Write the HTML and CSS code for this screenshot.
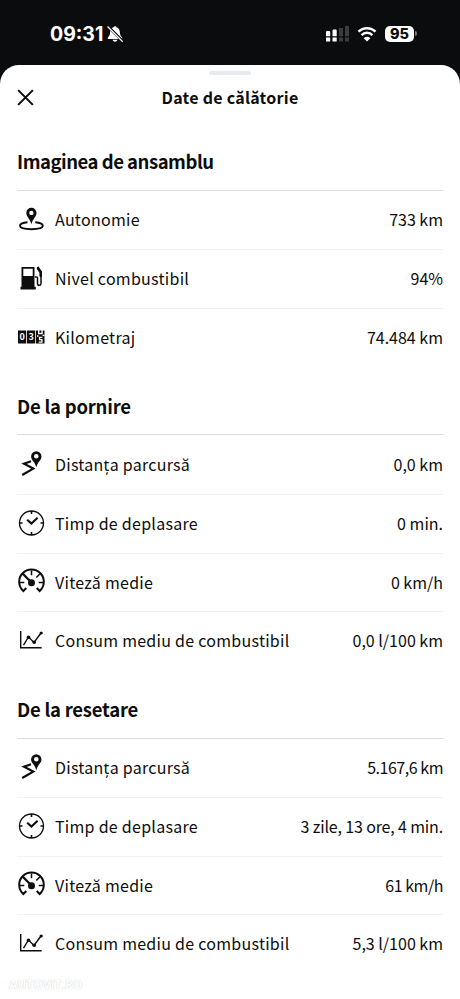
FILE: index.html
```html
<!DOCTYPE html>
<html lang="ro">
<head>
<meta charset="utf-8">
<title>Date de călătorie</title>
<link rel="stylesheet" href="styles.css">
</head>
<body>
<svg class="defs" aria-hidden="true">
  <symbol id="range" viewBox="0 0 28 28">
    <path fill-rule="evenodd" d="M14.400 2.800a5.100 5.100 0 0 0-5.100 5.100c0 3.800 3.600 5.400 5.100 11.400 1.500-6 5.100-7.600 5.100-11.400a5.100 5.100 0 0 0-5.100-5.100zm0 2.900a2.200 2.200 0 1 1 0 4.400 2.200 2.200 0 0 1 0-4.400z"/>
    <path class="line" stroke-width="1.900" d="M10.500 17.300C6 17.800 3 19 3 20.800c0 2.200 5 3.400 11.400 3.400s11.400-1.200 11.400-3.400c0-1.800-3-3-7.500-3.500"/>
  </symbol>
  <symbol id="fuel" viewBox="0 0 28 28">
    <path fill-rule="evenodd" d="M4.500 3h13v19.800h1.300v2.600H3.500v-2.600h1zM6.300 4.800v7.300h9.400V4.800z"/>
    <path class="line" stroke-width="1.500" d="M18 13h1.500q1 0 1 1v5.500q0 1.800 1.700 1.800T24 19.500V10"/>
    <path d="M20 3l1.500-.5L25 7.500v6l-2.600-1.200V8.700L19.800 5z"/>
  </symbol>
  <symbol id="route" viewBox="0 0 28 28">
    <path fill-rule="evenodd" d="M19.300 1.200A5.200 5.200 0 0 0 14.100 6.400c0 3.800 3.800 5 5.200 10.900 1.400-5.900 5.200-7.100 5.200-10.900a5.200 5.200 0 0 0-5.200-5.200zm0 2.700a2.300 2.300 0 1 1 0 4.600 2.300 2.300 0 0 1 0-4.600z"/>
    <path class="line" stroke-width="2.200" d="M14 11.200l-7 2.400 9.300 5L5.200 25"/>
  </symbol>
  <symbol id="clock" viewBox="0 0 28 28">
    <circle class="line" stroke-width="1.300" cx="14.500" cy="14" r="12"/>
    <path class="line" stroke-width="1.600" d="M14.500 2v3M14.500 23v3M2.500 14h3M23.500 14h3"/>
    <path class="line" stroke-width="2.100" d="M10.200 10.700l4.200 3.800 6.200-5.700"/>
  </symbol>
  <symbol id="speed" viewBox="0 0 28 28">
    <path class="line" stroke-width="2" d="M9.300 20l-3 3A12.300 12.300 0 1 1 22.700 23l-3-3"/>
    <path class="line" stroke-width="1.500" d="M14.500 2.500v4.700M2.500 14.500h4.800M21.700 14.500h4.800M22.800 6l-3.500 3.600"/>
    <path class="line" stroke-width="2.300" d="M5.800 5.800l8.700 8.700"/>
    <circle cx="14.500" cy="14.700" r="3.500"/>
  </symbol>
  <symbol id="chart" viewBox="0 0 28 28">
    <path class="line" stroke-width="1.400" d="M3.700 5v16.700h21"/>
    <path class="line" stroke-width="1.400" d="M6.500 19.200L11.500 11l5.500 5.500L24 7"/>
    <circle cx="11.500" cy="11.200" r="1.800"/><circle cx="17.200" cy="16.300" r="1.800"/><circle cx="24.200" cy="7" r="1.600"/>
  </symbol>
</svg>

<header class="status">
  <div class="clock">
    <span class="time">09:31</span>
    <svg class="bell" viewBox="0 0 18 18">
      <path d="M9 1.200c.8 0 1.300.5 1.500 1.100 2.300.8 3.300 2.800 3.400 5.200.1 2.600 1 3.600 2 4.700.8.900.4 1.800-.6 1.800H2.700c-1 0-1.400-.9-.6-1.800 1-1.100 1.900-2.100 2-4.700.1-2.400 1.100-4.400 3.400-5.200.2-.6.700-1.100 1.500-1.100zM6.600 14.800h4.800c-.3 1.300-1.200 2-2.400 2s-2.100-.7-2.400-2z"/>
      <path class="cut" d="M2 1.500L16.500 16"/><path class="slash" d="M1.500 1.500L16.700 16.700"/>
    </svg>
  </div>
  <div class="indicators">
    <svg class="signal" viewBox="0 0 24 18">
      <path d="M1 6h2.200q1 0 1 1v4.300H0V7q0-1 1-1zM0 12.500h4.200v4H0zM7.500 4.500h2.200q1 0 1 1v5.800H6.500V5.500q0-1 1-1zM6.500 12.500h4.200v4H6.500z"/>
      <path class="dim" d="M13 3h4v8.300h-4zM13 12.500h4v4h-4zM19 1h4v10.300h-4zM19 12.500h4v4h-4z"/>
    </svg>
    <svg class="wifi" viewBox="0 0 20 16">
      <path class="arc" d="M1.500 5.700a12 12 0 0 1 17 0M4.600 9.100a7.600 7.600 0 0 1 10.800 0"/>
      <path d="M10 15.500l-3.300-3.300a4.700 4.700 0 0 1 6.600 0z"/>
    </svg>
    <div class="battery"><span class="charge">95</span><span class="nub"></span></div>
  </div>
</header>

<main class="sheet">
  <div class="grabber"></div>
  <div class="titlebar">
    <svg class="close" viewBox="0 0 18 18"><path d="M1.200 1.200l15.600 15.600M16.800 1.200L1.200 16.800"/></svg>
    <h1>Date de călătorie</h1>
  </div>

  <section>
    <h2 class="overview">Imaginea de ansamblu</h2>
    <ul>
      <li><svg class="icon"><use href="#range"/></svg><span class="label">Autonomie</span><span class="value">733 km</span></li>
      <li><svg class="icon"><use href="#fuel"/></svg><span class="label">Nivel combustibil</span><span class="value">94%</span></li>
      <li>
        <svg class="icon odo" viewBox="0 0 28 28">
          <path d="M1 7.500h8.200v13H1zM10 7.500h8.200v13H10zM19 7.500h8.500v13H19z"/>
          <text x="5.100" y="17.200">0</text><text x="14.100" y="17.200">3</text>
          <path class="digit" d="M21.700 6.500v4h3.400v-4M25.400 14.300h-2.800v2.400h2.300v2.500h-3.200M20 13h1.500M25.500 12.300h2"/>
        </svg>
        <span class="label">Kilometraj</span><span class="value">74.484 km</span>
      </li>
    </ul>
  </section>
  <section>
    <h2>De la pornire</h2>
    <ul>
      <li><svg class="icon"><use href="#route"/></svg><span class="label">Distanța parcursă</span><span class="value">0,0 km</span></li>
      <li><svg class="icon"><use href="#clock"/></svg><span class="label">Timp de deplasare</span><span class="value">0 min.</span></li>
      <li><svg class="icon"><use href="#speed"/></svg><span class="label">Viteză medie</span><span class="value">0 km/h</span></li>
      <li><svg class="icon"><use href="#chart"/></svg><span class="label">Consum mediu de combustibil</span><span class="value">0,0 l/100 km</span></li>
    </ul>
  </section>
  <section>
    <h2>De la resetare</h2>
    <ul>
      <li><svg class="icon"><use href="#route"/></svg><span class="label">Distanța parcursă</span><span class="value tight">5.167,6 km</span></li>
      <li><svg class="icon"><use href="#clock"/></svg><span class="label">Timp de deplasare</span><span class="value snug">3 zile, 13 ore, 4 min.</span></li>
      <li><svg class="icon"><use href="#speed"/></svg><span class="label">Viteză medie</span><span class="value tight">61 km/h</span></li>
      <li><svg class="icon"><use href="#chart"/></svg><span class="label">Consum mediu de combustibil</span><span class="value">5,3 l/100 km</span></li>
    </ul>
  </section>
  <div class="watermark">AUTOVIT.RO</div>
</main>
</body>
</html>
```
FILE: styles.css
```css
* { box-sizing: border-box; }
body {
  margin: 0;
  height: 999px;
  overflow: hidden;
  background: #0b0c0e;
  color: #0d0d0d;
  font-family: "Noto Sans CJK SC", "Noto Sans", sans-serif;
}
.defs { position: absolute; width: 0; height: 0; }
.line { fill: none; stroke: #0d0d0d; }
.odo text { font: bold 9px "Noto Sans CJK SC", sans-serif; fill: #fff; text-anchor: middle; }
.digit { fill: none; stroke: #fff; stroke-width: 1.3; }

.status {
  height: 65px;
  padding: 2px 43px 0 50px;
  display: flex;
  align-items: center;
  justify-content: space-between;
  color: #fff;
}
.clock, .indicators { display: flex; align-items: center; }
.time { font: 700 19.5px/24px Inter, sans-serif; }
.bell { width: 18px; height: 18px; margin-left: 3px; fill: #fff; }
.cut { stroke: #0b0c0e; stroke-width: 3; }
.slash { stroke: #fff; stroke-width: 1.3; }
.signal { width: 24px; height: 18px; fill: #fff; }
.dim { fill: #3b3c3e; }
.wifi { width: 20px; height: 16px; margin-left: 7px; fill: #fff; }
.arc { fill: none; stroke: #fff; stroke-width: 2.5; }
.battery { display: flex; align-items: center; margin-left: 8px; gap: 1px; }
.charge {
  width: 29px;
  height: 16px;
  border-radius: 5px;
  background: #fff;
  color: #0b0c0e;
  font: 800 14.5px/16px Inter, sans-serif;
  text-align: center;
}
.nub { width: 2px; height: 5px; border-radius: 0 2px 2px 0; background: #77787a; }

.sheet {
  height: 934px;
  padding: 0 17px;
  border-radius: 19px 19px 0 0;
  background: #fff;
  display: flow-root;
}
.grabber { width: 42px; height: 4px; margin: 6px auto 0; border-radius: 2px; background: #e6ebf2; }
.titlebar {
  height: 47px;
  padding-bottom: 3px;
  display: grid;
  grid-template-columns: 17px 1fr 17px;
  align-items: center;
}
.close { width: 17px; height: 17px; fill: none; stroke: #0d0d0d; stroke-width: 2.2; }
h1 { margin: 0; font-size: 16px; line-height: 24px; font-weight: 700; text-align: center; letter-spacing: 0.25px; }
h2 {
  height: 68.800px;
  margin: 0;
  padding-top: 26px;
  font-size: 18.500px;
  line-height: 26px;
  font-weight: 700;
  letter-spacing: -0.230px;
  border-bottom: 1px solid #d9dcea;
}
.overview { letter-spacing: -0.480px; }
ul { margin: 0; padding: 0; list-style: none; }
li {
  height: 58.600px;
  padding-bottom: 1.500px;
  display: flex;
  align-items: center;
  font-size: 16px;
  line-height: 24px;
}
li + li { border-top: 1px solid #f2f2f2; }
.icon { width: 28px; height: 28px; fill: #0d0d0d; }
.label { margin-left: 10px; letter-spacing: 0.27px; }
.value { margin-left: auto; }
.snug { letter-spacing: -0.15px; }
.tight { letter-spacing: -0.47px; }
.watermark {
  margin: 2px 0 0 -8px;
  font: 700 12px/20px "Open Sans", sans-serif;
  color: #fff;
  text-shadow: 0 0 1px #bbb;
}
```
